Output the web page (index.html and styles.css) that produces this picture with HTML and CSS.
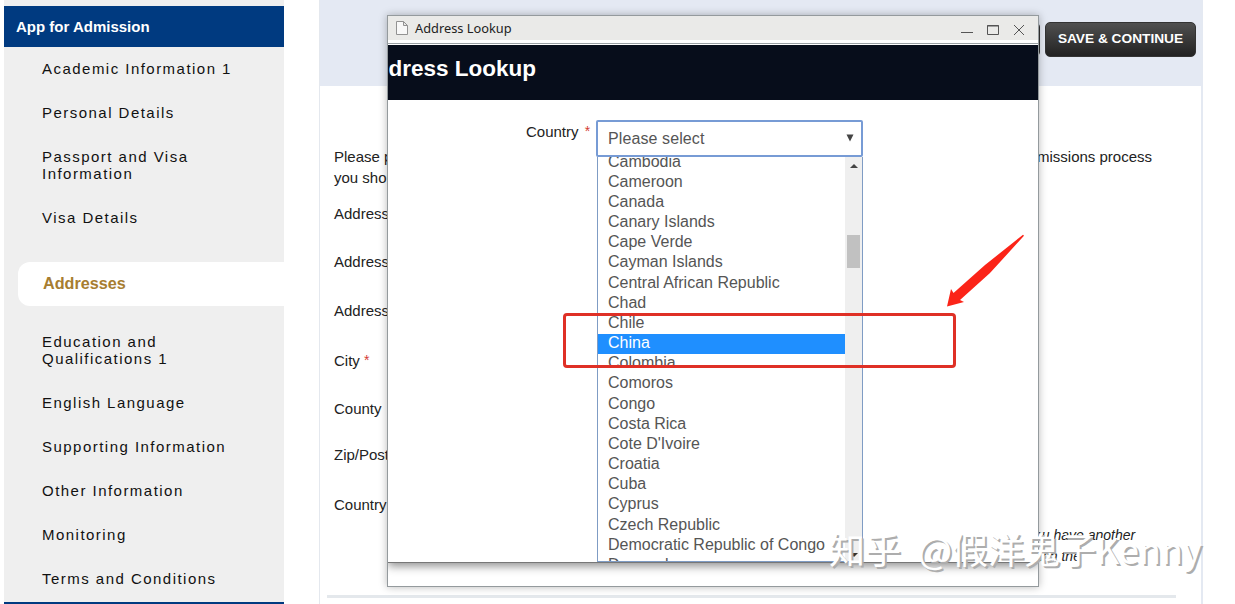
FILE: index.html
```html
<!DOCTYPE html>
<html lang="en">
<head>
<meta charset="utf-8">
<title>App for Admission</title>
<link rel="stylesheet" href="styles.css">
</head>
<body>
<div class="page">
  <nav class="sidebar">
    <h2 class="sidebar-title">App for Admission</h2>
    <ul class="steps">
      <li>Academic Information 1</li>
      <li>Personal Details</li>
      <li>Passport and Visa Information</li>
      <li>Visa Details</li>
    </ul>
    <div class="current">Addresses</div>
    <ul class="steps steps-after">
      <li>Education and Qualifications 1</li>
      <li>English Language</li>
      <li>Supporting Information</li>
      <li>Other Information</li>
      <li>Monitoring</li>
      <li>Terms and Conditions</li>
    </ul>
  </nav>
  <main class="content">
    <header class="toolbar"><span class="btn btn-prev"></span><span class="btn">SAVE &amp; CONTINUE</span></header>
    <section class="form">
      <div class="intro"><p>Please provide<br>you should</p><p class="intro-end">admissions process</p></div>
      <div class="fields">
        <label class="f1">Address</label>
        <label class="f2">Address</label>
        <label class="f3">Address</label>
        <label class="f4">City <i class="req">*</i></label>
        <label class="f5">County</label>
        <label class="f6">Zip/Postcode</label>
        <label class="f7">Country</label>
      </div>
      <div class="note"><p>you have another<br><span class="note-end">such the</span></p></div>
      <hr class="rule">
    </section>
  </main>
</div>

<div class="window">
  <div class="titlebar">
    <svg class="doc" width="12" height="14" viewBox="0 0 12 14"><path d="M1 .5H7.5L11.5 4.5V13.5H.5V.5ZM7.5 .5V4.5H11.5" fill="#f8f8f8" stroke="#929292"/></svg>
    <span class="window-name">Address Lookup</span>
    <svg class="controls" width="66" height="14" viewBox="0 0 66 14" fill="none" stroke="#555"><path d="M0 9.5H12M26.5 2.5H37.500V11.5H26.5ZM26 3H38M53 2L63 12M63 2L53 12"/></svg>
  </div>
  <div class="window-body">
    <div class="banner"><h1>Address Lookup</h1></div>
    <div class="country-row">
      <span class="country-label">Country <i class="req">*</i></span>
      <div class="select">
        <span>Please select</span>
        <svg width="8" height="8" viewBox="0 0 8 8"><path d="M.5 .5H7.5L4 7.5Z" fill="#444"/></svg>
      </div>
    </div>
    <div class="dropdown">
      <ul class="options">
        <li>Cambodia</li><li>Cameroon</li><li>Canada</li><li>Canary Islands</li><li>Cape Verde</li>
        <li>Cayman Islands</li><li>Central African Republic</li><li>Chad</li><li>Chile</li>
        <li class="selected">China</li><li>Colombia</li><li>Comoros</li><li>Congo</li><li>Costa Rica</li>
        <li>Cote D'Ivoire</li><li>Croatia</li><li>Cuba</li><li>Cyprus</li><li>Czech Republic</li>
        <li>Democratic Republic of Congo</li><li>Denmark</li>
      </ul>
      <div class="scrollbar">
        <svg width="8" height="4" viewBox="0 0 8 4"><path d="M0 4H8L4 0Z" fill="#444"/></svg>
        <div class="thumb"></div>
        <svg class="down" width="8" height="4" viewBox="0 0 8 4"><path d="M0 0H8L4 4Z" fill="#333"/></svg>
      </div>
    </div>
  </div>
  <div class="window-foot"></div>
</div>

<div class="highlight"></div>
<svg class="arrow" width="80" height="76" viewBox="0 0 80 76"><path d="M77 .8L39 31L7.500 59L5 55L1 72.500L18 68L14 66L44 39L78 1.800Z" fill="#fb2418"/></svg>
<div class="watermark">知乎 @假洋鬼子Kenny</div>
</body>
</html>
```
FILE: styles.css
```css
* { box-sizing: border-box; }
body { margin: 0; height: 604px; overflow: hidden; position: relative; background: #fff; color: #222; font: 15px/17px "Liberation Sans", Arial, sans-serif; }
h1, h2, p, ul { margin: 0; padding: 0; }
ul { list-style: none; }
.page { display: flex; gap: 35px; padding-left: 4px; height: 604px; }
.sidebar { width: 280px; height: 604px; padding-top: 6px; background: #efefef; border-bottom: 2px solid #003a80; flex: none; }
.sidebar-title { height: 41px; padding: 0 0 0 12px; background: #003a80; color: #fff; font-size: 15px; line-height: 41px; }
.steps { display: flex; flex-direction: column; gap: 27px; padding: 13px 40px 0 38px; height: 215px; letter-spacing: 1.47px; color: #111; }
.steps-after { padding-top: 27px; height: 296px; }
.current { height: 44px; margin-left: 14px; padding-left: 25px; background: #fff; border-radius: 12px 0 0 12px; color: #a77d30; font-size: 16.2px; font-weight: bold; line-height: 43px; }
.content { width: 884px; height: 604px; border-left: 1px solid #e4e8ee; border-right: 2px solid #e4e9f2; }
.toolbar { display: flex; justify-content: flex-end; gap: 5px; height: 86px; padding: 22px 5px 0 0; background: #e4e9f3; }
.btn { width: 151px; height: 35px; border-radius: 5px; border: 1px solid #333; background: linear-gradient(#505050, #222); color: #fff; font-size: 13.7px; font-weight: bold; line-height: 31px; text-align: center; }
.form { padding-left: 7px; }
.intro { display: flex; justify-content: space-between; padding: 60px 49px 0 7px; line-height: 21px; }
.fields { display: flex; flex-direction: column; padding: 17px 0 0 7px; height: 338px; }
.fields label { height: 17px; flex: none; }
.f2 { margin-top: 31px; }
.f3 { margin-top: 32px; }
.f4 { margin-top: 33px; }
.f5 { margin-top: 31px; }
.f6 { margin-top: 29px; }
.f7 { margin-top: 33px; }
.req { color: #d43b35; font-style: normal; font-size: 14px; position: relative; top: -1px; }
.note { margin-top: -1px; padding-left: 700px; font-size: 14px; font-style: italic; line-height: 21px; white-space: nowrap; }
.note-end { padding-left: 1px; }
.rule { margin: 28px 25px 0 0; height: 3px; border: 0; background: #e4e8ec; }

.window { position: absolute; left: 387px; top: 15px; width: 652px; height: 572px; border: 1px solid #949a9d; background: #fff; box-shadow: 0 0 8px rgba(0,0,0,.28); }
.titlebar { display: flex; align-items: center; height: 24px; padding: 0 11px 0 8px; background: #eaeae8; }
.window-name { margin-left: 7px; font: 12.8px/22px "Noto Sans", sans-serif; color: #222; }
.controls { margin-left: auto; margin-top: 3px; }
.window-body { position: relative; height: 523px; padding-top: 3px; background: #fff; border-bottom: 1px solid #777; box-shadow: 0 3px 9px rgba(0,0,0,.45); clip-path: inset(0 0 -20px 0); }
.banner { height: 57px; border-top: 1px solid #9aa0a4; box-shadow: inset 0 1px #fff; background: #070d1b; overflow: hidden; }
.banner h1 { margin-left: -28px; padding-top: 15px; width: 176px; color: #fff; font-size: 22.5px; line-height: 20px; text-align: right; white-space: nowrap; direction: rtl; }
.country-row { display: flex; padding: 20px 0 0 138px; }
.country-label { width: 70px; padding-top: 3px; }
.country-label .req { margin-left: 2px; }
.select { display: flex; align-items: center; justify-content: space-between; width: 267px; height: 37px; padding: 0 7px 1px 10px; border: 2px solid #779bd5; border-radius: 2px; font-size: 16px; letter-spacing: .1px; color: #555; }
.dropdown { position: absolute; left: 209px; top: 117px; width: 266px; height: 405px; border: solid #7f9cc4; border-width: 0 1px 1px; background: #fff; display: flex; overflow: hidden; }
.options { flex: 1; margin-top: -5.5px; font-size: 16px; line-height: 20.18px; color: #555; }
.options li { height: 20.18px; padding-left: 10px; flex: none; }
.options .selected { background: linear-gradient(#fff 1px, #1f8fff 1px); box-shadow: 0 1px #1f8fff; color: #fff; line-height: 19.5px; }
.scrollbar { width: 17px; height: 405px; padding: 7px 0 5px; display: flex; flex-direction: column; align-items: center; background: #efefef; }
.thumb { width: 13px; height: 33px; margin-top: 67px; background: #c1c1c1; }
.down { margin-top: auto; }
.highlight { position: absolute; left: 563px; top: 313px; width: 393px; height: 55px; border: 3px solid #df3026; border-radius: 4px; }
.arrow { position: absolute; left: 946px; top: 234px; }
.watermark { position: absolute; left: 829px; top: 523px; font: 36px/50px "Noto Sans CJK SC", sans-serif; word-spacing: 9px; color: #fff; text-shadow: 2px 2px 0 #adadad; white-space: nowrap; }
```
